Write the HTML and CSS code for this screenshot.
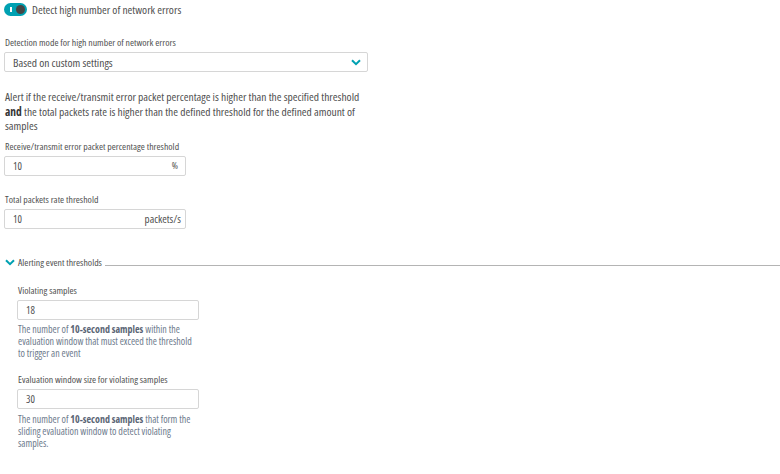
FILE: index.html
```html
<!DOCTYPE html>
<html>
<head>
<meta charset="utf-8">
<link rel="stylesheet" href="styles.css">
</head>
<body>
<div class="page">
  <div class="toggle-row">
    <span class="toggle"><span class="toggle-bar"></span><span class="toggle-knob"></span></span>
    <span class="toggle-label">Detect high number of network errors</span>
  </div>

  <div class="field field-mode">
    <div class="label">Detection mode for high number of network errors</div>
    <div class="select">
      <span>Based on custom settings</span>
      <svg class="chev" width="10" height="7" viewBox="0 0 10 7"><path d="M1 1.2 L5 5.2 L9 1.2" fill="none" stroke="#00a1b2" stroke-width="2"/></svg>
    </div>
  </div>

  <p class="desc">Alert if the receive/transmit error packet percentage is higher than the specified threshold <b>and</b> the total packets rate is higher than the defined threshold for the defined amount of samples</p>

  <div class="field field-pct">
    <div class="label">Receive/transmit error packet percentage threshold</div>
    <div class="input"><span>10</span><span class="unit">%</span></div>
  </div>

  <div class="field field-rate">
    <div class="label">Total packets rate threshold</div>
    <div class="input"><span>10</span><span class="unit unit-lg">packets/s</span></div>
  </div>

  <div class="section-head">
    <svg class="chev-sec" width="10" height="7" viewBox="0 0 10 7"><path d="M1 1.2 L5 5.2 L9 1.2" fill="none" stroke="#00a1b2" stroke-width="2"/></svg>
    <span class="section-title">Alerting event thresholds</span>
    <span class="section-line"></span>
  </div>

  <div class="section-body">
    <div class="field field-viol">
      <div class="label">Violating samples</div>
      <div class="input"><span>18</span></div>
      <div class="help">The number of <b>10-second samples</b> within the evaluation window that must exceed the threshold to trigger an event</div>
    </div>
    <div class="field field-eval">
      <div class="label">Evaluation window size for violating samples</div>
      <div class="input"><span>30</span></div>
      <div class="help help-eval">The number of <b>10-second samples</b> that form the sliding evaluation window to detect violating samples.</div>
    </div>
  </div>
</div>
</body>
</html>
```

FILE: styles.css
```css
* { box-sizing: border-box; }
html, body { margin: 0; padding: 0; background: #fff; }
body {
  font-family: "Open Sans", "Noto Sans", sans-serif;
  font-stretch: 75%;
  color: #505050;
  width: 780px;
  height: 474px;
  overflow: hidden;
}
.page { padding: 3px 0 0 4px; }

.toggle-row { display: flex; align-items: center; height: 13px; }
.toggle {
  position: relative;
  width: 23px; height: 13px;
  border-radius: 7px;
  background: #00a1b2;
  display: inline-block;
  flex: none;
}
.toggle-bar {
  position: absolute; left: 6px; top: 4px;
  width: 1.5px; height: 5px; background: #fff;
}
.toggle-knob {
  position: absolute; right: 2px; top: 2px;
  width: 9px; height: 9px; border-radius: 50%;
  background: #454646;
}
.toggle-label { margin-left: 5px; font-size: 11.5px; line-height: 13px; }

.field { margin-top: 0; }
.label { font-size: 9.8px; line-height: 12px; margin-left: 1px; }

.field-mode { margin-top: 21px; }
.select {
  margin-top: 3px;
  width: 364px; height: 20px;
  border: 1px solid #d6d6d6;
  border-radius: 2px;
  display: flex; align-items: center; justify-content: space-between;
  padding: 0 6px 0 8px;
  font-size: 11.5px;
}
.chev { display: block; }

.desc {
  margin: 18px 0 0 1px;
  width: 362px;
  font-size: 11.5px;
  line-height: 14.5px;
}
.desc b { font-weight: 700; color: #353535; }

.field-pct { margin-top: 7px; }
.field-rate { margin-top: 18px; }
.input {
  margin-top: 3px;
  width: 182px; height: 20px;
  border: 1px solid #d6d6d6;
  border-radius: 2px;
  display: flex; align-items: center; justify-content: space-between;
  padding: 0 7px 0 8px;
  font-size: 10.5px;
}
.unit { font-size: 9.5px; }
.unit-lg { font-size: 11px; margin-right: -3px; }

.section-head { display: flex; align-items: center; margin-top: 27px; height: 14px; }
.chev-sec { margin-left: 1px; flex: none; }
.section-title { font-size: 9.8px; margin-left: 3px; }
.section-line { flex: 1; height: 1px; background: #b4b4b4; margin-left: 3px; align-self: flex-end; margin-bottom: 4px; }

.section-body { padding-left: 13px; }
.field-viol { margin-top: 15px; }
.field-eval { margin-top: 15px; }
.help {
  margin-top: 3px;
  width: 178px;
  font-size: 10px;
  line-height: 12px;
  color: #6d7a8c;
  margin-left: 1px;
}
.help-eval { margin-top: 4px; }
.help b { font-weight: 700; color: #5a6575; }
```
